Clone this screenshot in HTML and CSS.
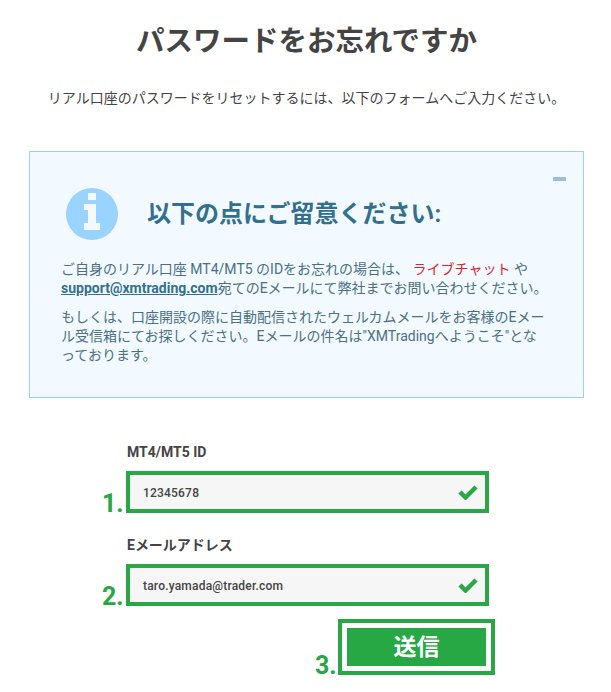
FILE: index.html
```html
<!DOCTYPE html>
<html lang="ja">
<head>
<meta charset="utf-8">
<title>パスワードをお忘れですか</title>
<link rel="stylesheet" href="styles.css">
</head>
<body>
<main class="page">
  <h1 class="title">パスワードをお忘れですか</h1>
  <p class="lead">リアル口座のパスワードをリセットするには、以下のフォームへご入力ください。</p>
  <section class="notice">
    <span class="collapse"></span>
    <div class="notice-head">
      <svg class="info" viewBox="0 0 52 52" width="52" height="52" aria-hidden="true">
        <circle cx="26" cy="26" r="26" fill="#99d3ff"/>
        <path fill="#f2faff" d="M22 5h8v7h-8zM18 16h12v19h4v7H18v-7h4V22h-4z"/>
      </svg>
      <h2 class="notice-title">以下の点にご留意ください:</h2>
    </div>
    <p class="notice-text notice-fixed">ご自身のリアル口座 MT4/MT5 のIDをお忘れの場合は、 <span class="chat">ライブチャット</span> や<br><a class="mail">support@xmtrading.com</a>宛てのEメールにて弊社までお問い合わせください。</p>
    <p class="notice-text">もしくは、口座開設の際に自動配信されたウェルカムメールをお客様のEメール受信箱にてお探しください。Eメールの件名は"XMTradingへようこそ"となっております。</p>
  </section>
  <form class="form">
    <label class="label">MT4/MT5 ID</label>
    <div class="field">
      <span class="step">1.</span>
      <span class="value">12345678</span>
      <svg class="check" viewBox="0 0 20 16" width="20" height="16" aria-hidden="true"><path d="M2 8l5.5 5.5L18 3" fill="none" stroke="#28a745" stroke-width="4.4"/></svg>
    </div>
    <label class="label label-second">Eメールアドレス</label>
    <div class="field">
      <span class="step">2.</span>
      <span class="value">taro.yamada@trader.com</span>
      <svg class="check" viewBox="0 0 20 16" width="20" height="16" aria-hidden="true"><path d="M2 8l5.5 5.5L18 3" fill="none" stroke="#28a745" stroke-width="4.4"/></svg>
    </div>
    <div class="actions">
      <div class="submit-frame">
        <span class="step step-submit">3.</span>
        <button class="submit" type="button">送信</button>
      </div>
    </div>
  </form>
</main>
</body>
</html>
```
FILE: styles.css
```css
* { box-sizing: border-box; }
html, body { margin: 0; padding: 0; background: #fff; }
body {
  font-family: Roboto, "Noto Sans CJK JP", sans-serif;
  color: #444;
}
.page { width: 611px; height: 692px; padding: 22px 27px 0 29px; overflow: hidden; }
.title {
  margin: 0;
  text-align: center;
  font-size: 28.5px;
  line-height: 40px;
  font-weight: 700;
  color: #444;
}
.lead {
  margin: 26px 0 0;
  text-align: center;
  font-size: 14px;
  line-height: 20px;
  color: #444;
  white-space: nowrap;
}
.notice {
  position: relative;
  margin-top: 43px;
  width: 555px;
  height: 247px;
  padding: 36px 36px 0 31px;
  background: #f2faff;
  border: 1px solid #99cfff;
}
.collapse {
  position: absolute;
  top: 25px;
  right: 17px;
  width: 13px;
  height: 4px;
  background: #9dbfd3;
}
.notice-head { display: flex; align-items: center; gap: 29px; padding-left: 5px; height: 52px; }
.notice-title {
  margin: 0;
  font-size: 24px;
  line-height: 32px;
  font-weight: 700;
  color: #33708f;
}
.notice-text {
  margin: 0;
  font-size: 14px;
  line-height: 19px;
  color: #4c6f83;
}
.notice-fixed { white-space: nowrap; }
.notice-head + .notice-text { margin-top: 20px; }
.notice-text + .notice-text { margin-top: 10px; }
.chat { color: #e2202c; }
.mail { color: #33708f; font-weight: 700; text-decoration: underline; }
.form { margin: 41px 0 0 97px; width: 363px; }
.label {
  display: block;
  height: 26px;
  padding-left: 1px;
  font-size: 14px;
  line-height: 26px;
  font-weight: 700;
  color: #444;
}
.label-second { margin-top: 19px; }
.field {
  position: relative;
  display: flex;
  align-items: center;
  justify-content: space-between;
  height: 42px;
  margin-top: 6px;
  padding: 2px 7px 0 13px;
  background: #f6f6f6;
  border: 4px solid #28a745;
}
.value { font-size: 12px; font-weight: 500; color: #444; letter-spacing: .2px; }
.check { margin-top: -3px; }
.step {
  position: absolute;
  left: -28px;
  bottom: -10px;
  font-size: 25px;
  line-height: 30px;
  font-weight: 700;
  color: #28a745;
}
.actions { display: flex; justify-content: flex-end; margin: 13px -6px 0 0; }
.submit-frame {
  position: relative;
  width: 157px;
  height: 56px;
  padding: 5px;
  border: 4px solid #28a745;
  background: #fff;
}
.step-submit { left: -27px; bottom: -10px; }
.submit {
  display: block;
  width: 100%;
  height: 100%;
  padding: 0;
  border: 0;
  background: #28a745;
  color: #fff;
  font: 700 23px/1 Roboto, "Noto Sans CJK JP", sans-serif;
}
```
